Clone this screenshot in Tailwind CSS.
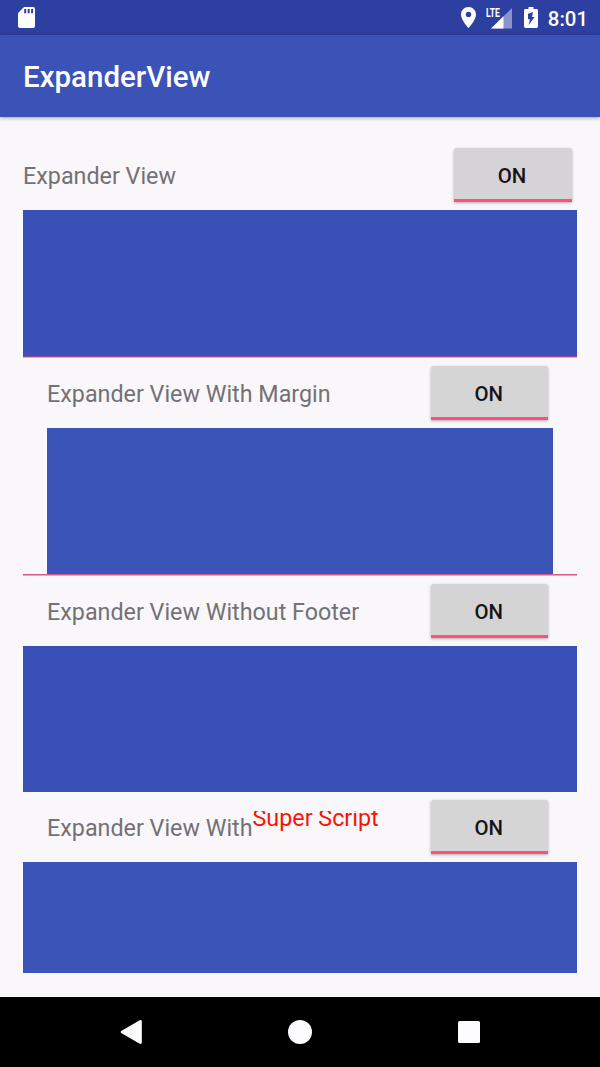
<!DOCTYPE html>
<html lang="en">
<head>
<meta charset="utf-8">
<title>ExpanderView</title>
<script src="https://cdn.jsdelivr.net/npm/@tailwindcss/browser@4"></script>
</head>
<body class="flex h-[1067px] w-[600px] flex-col overflow-hidden bg-[#f9f7fa] font-[Roboto,sans-serif]">
  <div class="flex h-[35px] shrink-0 items-center bg-[#2d3fa0] pr-3 pl-[18px] text-[#fdfcfe]">
    <svg class="h-[21px] w-[17px]" viewBox="0 0 17 21" fill="currentColor"><path fill-rule="evenodd" d="M6 0H15.2Q17 0 17 1.8V19.2Q17 21 15.2 21H1.8Q0 21 0 19.2V6ZM6.2 2V6.2H8.2V2ZM9.7 2V6.2H11.7V2ZM13.1 2V6.2H15.1V2Z"/></svg>
    <svg class="ml-auto h-[21px] w-[15px]" viewBox="0 0 15 21" fill="currentColor"><path fill-rule="evenodd" d="M7.5 0C3.3 0 0 3.3 0 7.4C0 13 7.5 21 7.5 21S15 13 15 7.4C15 3.3 11.7 0 7.5 0ZM7.5 4.7A2.7 2.7 0 1 1 7.5 10.1A2.7 2.7 0 0 1 7.5 4.7Z"/></svg>
    <svg class="ml-[10px] h-[22px] w-[27px] overflow-visible" viewBox="0 0 27 22" fill="currentColor"><path fill-opacity=".45" d="M26 1V21.5H5Z"/><path d="M17.5 9.3V21.5H5Z"/><text x="0" y="10" font-family="Roboto" font-weight="700" font-size="13" textLength="14" lengthAdjust="spacingAndGlyphs">LTE</text></svg>
    <svg class="ml-[11px] h-[21px] w-[14px]" viewBox="0 0 14 21" fill="currentColor"><path fill-rule="evenodd" d="M4.5 0H9.5V2H12.6Q14 2 14 3.4V19.6Q14 21 12.6 21H1.4Q0 21 0 19.6V3.4Q0 2 1.4 2H4.5ZM9 5L4 6.8V12.2H6L4.6 18L10.6 10H8Z"/></svg>
    <span class="ml-[10px] pt-[2px] text-[20.4px] leading-6 font-medium">8:01</span>
  </div>
  <header class="z-10 flex h-[82px] shrink-0 items-center bg-[#3b52b7] pt-[4px] pl-[23px] shadow-[0_1px_4px_rgba(0,0,0,0.35)]">
    <h1 class="text-[29.5px] leading-none font-medium text-[#fdfcfe]">ExpanderView</h1>
  </header>
  <main class="flex grow flex-col px-[23px] pt-[23px]">
    <section class="w-[554px]">
      <div class="flex h-[70px] items-center justify-between pr-[5px]">
        <span class="h-[33px] text-[23.3px] leading-[35px] text-[#737174]">Expander View</span>
        <button class="h-[54px] w-[118px] rounded-t-[3px] border-b-[3px] border-[#ff4f7d] bg-[#d5d3d6] pt-[5px] pr-[2px] text-[20.4px] font-medium text-[#151416] shadow-[0_1px_3px_rgba(0,0,0,0.3)]">ON</button>
      </div>
      <div class="h-[146px] bg-[#3951b6]"></div>
      <div class="h-[2px] border-b border-[#e8a5cc] bg-[#9b4a9b]"></div>
    </section>
    <section class="w-[554px]">
      <div class="flex h-[70px] items-center justify-between pr-[29px] pl-6">
        <span class="h-[33px] text-[23.3px] leading-[35px] text-[#737174]">Expander View With Margin</span>
        <button class="h-[54px] w-[117.5px] rounded-t-[3px] border-b-[3px] border-[#ff4f7d] bg-[#d6d5d6] pt-[5px] pr-px text-[20.4px] font-medium text-[#151416] shadow-[0_1px_3px_rgba(0,0,0,0.3)]">ON</button>
      </div>
      <div class="mr-[24px] ml-6 h-[146px] bg-[#3b54b8]"></div>
      <div class="h-[2px] border-b border-[#eda0b8] bg-[#d85f8c]"></div>
    </section>
    <section class="w-[554px]">
      <div class="flex h-[70px] items-center justify-between pr-[29px] pl-6">
        <span class="h-[33px] text-[23.3px] leading-[35px] text-[#737174]">Expander View Without Footer</span>
        <button class="h-[54px] w-[117.5px] rounded-t-[3px] border-b-[3px] border-[#ff4f7d] bg-[#d5d4d5] pt-[5px] pr-px text-[20.4px] font-medium text-[#151416] shadow-[0_1px_3px_rgba(0,0,0,0.3)]">ON</button>
      </div>
      <div class="h-[146px] bg-[#3951b6]"></div>
    </section>
    <section class="w-[554px]">
      <div class="flex h-[70px] items-center justify-between pr-[29px] pl-6">
        <!-- The raised span is clipped by the top of its label -->
        <div class="flex h-[33px] items-start overflow-hidden text-[23.3px] leading-[35px] text-[#737174]">
          <span>Expander View With</span><span class="-mt-[10px] text-[#fb1405]">Super Script</span>
        </div>
        <button class="h-[54px] w-[117.5px] rounded-t-[3px] border-b-[3px] border-[#ff4f7d] bg-[#d6d5d6] pt-[5px] pr-px text-[20.4px] font-medium text-[#151416] shadow-[0_1px_3px_rgba(0,0,0,0.3)]">ON</button>
      </div>
      <div class="h-[111px] bg-[#3b54b8]"></div>
    </section>
  </main>
  <nav class="flex h-[70px] shrink-0 items-center bg-black pr-[120px] pl-[120px] text-[#fdfcfe]">
    <svg class="h-6 w-[22px]" viewBox="0 0 22 24" fill="currentColor"><path d="M1.2 11.1L19.3.4Q21.8-.6 21.8 1.5V22.5Q21.8 24.6 19.3 23.6L1.2 12.9Q0 12 1.2 11.1Z"/></svg>
    <span class="ml-[146px] size-6 rounded-full bg-current"></span>
    <span class="ml-[146px] size-[22px] rounded-[1.5px] bg-current"></span>
  </nav>
</body>
</html>
